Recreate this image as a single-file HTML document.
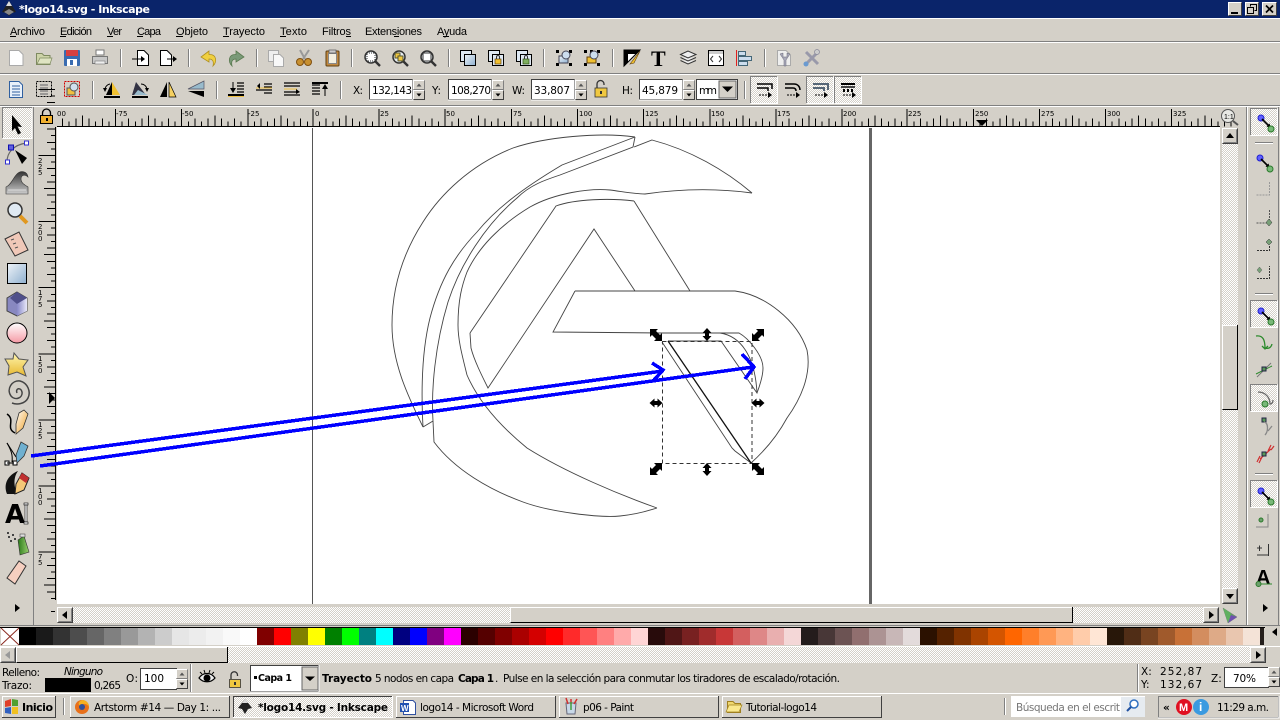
<!DOCTYPE html>
<html><head><meta charset="utf-8"><title>logo14.svg - Inkscape</title>
<style>
html,body{margin:0;padding:0;width:1280px;height:720px;overflow:hidden;background:#d4d0c8}
svg{position:absolute;left:0;top:0;display:block}
#pal{position:absolute;left:19px;top:628px;width:1245px;height:17px;display:flex;overflow:hidden}
#pal i{flex:0 0 17px;height:17px;display:block}
text{font-family:"Liberation Sans",sans-serif;font-size:11px;fill:#000}
.v{font-family:"DejaVu Sans",sans-serif;font-size:10.5px}
.b{font-family:"DejaVu Sans",sans-serif;font-size:10.5px;font-weight:bold}
.r{font-family:"DejaVu Sans",sans-serif;font-size:7px}
</style></head><body>
<svg width="1280" height="720" viewBox="0 0 1280 720" xmlns="http://www.w3.org/2000/svg">
<defs>
<pattern id="d" width="2" height="2" patternUnits="userSpaceOnUse"><rect width="2" height="2" fill="#d4d0c8"/><rect width="1" height="1" fill="#fff"/><rect x="1" y="1" width="1" height="1" fill="#fff"/></pattern>
<linearGradient id="gb" x1="0" y1="0" x2="1" y2="1"><stop offset="0" stop-color="#eef3f8"/><stop offset="1" stop-color="#8fb0cf"/></linearGradient>
<linearGradient id="gp" x1="0" y1="0" x2="0" y2="1"><stop offset="0" stop-color="#fff"/><stop offset="1" stop-color="#f59aa5"/></linearGradient>
<linearGradient id="gg" x1="0" y1="0" x2="0" y2="1"><stop offset="0" stop-color="#333"/><stop offset="1" stop-color="#ccc"/></linearGradient>
<linearGradient id="gy" x1="0" y1="0" x2="0" y2="1"><stop offset="0" stop-color="#fff6b0"/><stop offset="1" stop-color="#e8b830"/></linearGradient>
<linearGradient id="gs" x1="0" y1="0" x2="1" y2="0"><stop offset="0" stop-color="#8888c8"/><stop offset="1" stop-color="#e8e8f8"/></linearGradient>
<linearGradient id="ggr" x1="0" y1="0" x2="1" y2="0"><stop offset="0" stop-color="#2c7a1a"/><stop offset="1" stop-color="#9ad070"/></linearGradient>
<linearGradient id="go" x1="0" y1="0" x2="1" y2="1"><stop offset="0" stop-color="#fff"/><stop offset="1" stop-color="#f0a020"/></linearGradient>

<g id="b16"><rect width="16" height="16" fill="#d4d0c8"/><path d="M.5 15V.5H15" fill="none" stroke="#fff"/><path d="M.5 15.5H15.5V.5" fill="none" stroke="#404040"/><path d="M1.5 14.5H14.5V1.5" fill="none" stroke="#808080"/></g>
<g id="spin"><rect width="12" height="10" fill="#d4d0c8"/><rect y="10" width="12" height="10" fill="#d4d0c8"/><path d="M.5 9V.5H11" fill="none" stroke="#fff"/><path d="M.5 9.5H11.5V.5" fill="none" stroke="#808080"/><path d="M.5 19V10.5H11" fill="none" stroke="#fff"/><path d="M.5 19.5H11.5V10.5" fill="none" stroke="#404040"/><path d="M6 3.5 3.5 6.5H8.5Z" fill="#555"/><path d="M6 16.5 3.5 13.5H8.5Z" fill="#000"/></g>
<g id="snapn"><circle cx="3" cy="3" r="3" fill="#6060ff" stroke="#2020d0"/><path d="M4 4 11 11" stroke="#000" stroke-width="1.6"/><path d="M13 13 8.5 11.5 11.5 8.5Z" fill="#000"/><circle cx="13" cy="14" r="3" fill="#78b878" stroke="#2c7a2c"/></g>
<g id="tog"><rect width="28" height="28" fill="url(#d)"/><path d="M.5 27V.5H27" fill="none" stroke="#808080"/><path d="M.5 27.5H27.5V.5" fill="none" stroke="#fff"/></g>
<g id="tk"><path d="M0 .5V18" stroke="#000"/><path d="M6.61 13V18M19.84 13V18M33.07 13V18M46.3 13V18M59.53 13V18" stroke="#000"/><path d="M13.23 10V18M26.46 10V18M39.68 10V18M52.91 10V18" stroke="#000"/><path d="M33.07 7V18" stroke="#000"/></g>
<g id="tkv"><path d="M.5 0H17" stroke="#000"/><path d="M13 6.61H17M13 19.84H17M13 33.07H17M13 46.3H17M13 59.53H17" stroke="#000"/><path d="M9 13.23H17M9 26.46H17M9 39.68H17M9 52.91H17" stroke="#000"/><path d="M6 33.07H17" stroke="#000"/></g>
<g id="zoomic"><circle cx="7" cy="7" r="6" fill="#e8eef2" stroke="#333" stroke-width="1.5"/><path d="M11.5 11.5 16 16" stroke="#333" stroke-width="2.4"/></g>
<g id="ha"><path d="M0 5 5 .5V3H8V.5L13 5 8 9.5V7H5V9.5Z" fill="#000"/></g>
<g id="hv"><path d="M5 0 9.500 5H7V8H9.500L5 13 .5 8H3V5H.5Z" fill="#000"/></g>
<g id="hd1"><path d="M12 0V8L10 6 6 10 8 12H0V4L2 6 6 2 4 0Z" fill="#000"/></g>
<g id="hd2"><path d="M0 0H8L6 2 10 6 12 4V12H4L6 10 2 6 0 8Z" fill="#000"/></g>
</defs>

<rect width="1280" height="720" fill="#d4d0c8"/>

<!-- title bar -->
<rect width="1280" height="18" fill="#0a246a"/>
<path d="M9 1 16 12 12 13 9 16 6 13 2 12Z" fill="#222"/><path d="M9 1 12 6H6Z" fill="#ddd"/><path d="M4 12 9 9 14 12 9 15Z" fill="#888"/>
<text x="19" y="13" class="b" style="fill:#fff;font-size:11px" textLength="131" lengthAdjust="spacing">*logo14.svg - Inkscape</text>
<g transform="translate(1228,2)"><rect width="14" height="14" fill="#d4d0c8"/><path d="M.5 13V.5H13" fill="none" stroke="#fff"/><path d="M.5 13.500H13.500V.5" fill="none" stroke="#404040"/><rect x="3" y="10" width="7" height="2" fill="#000"/></g>
<g transform="translate(1245,2)"><rect width="14" height="14" fill="#d4d0c8"/><path d="M.5 13V.5H13" fill="none" stroke="#fff"/><path d="M.5 13.500H13.500V.5" fill="none" stroke="#404040"/><path d="M5.500 4.500V2.500H11.500V8.500H9.500M2.500 5.500H8.500V11.500H2.500Z" fill="none" stroke="#000"/><path d="M5 2.500H12M2 5.500H9" stroke="#000"/></g>
<g transform="translate(1262,2)"><rect width="15" height="14" fill="#d4d0c8"/><path d="M.5 13V.5H14" fill="none" stroke="#fff"/><path d="M.5 13.500H14.500V.5" fill="none" stroke="#404040"/><path d="M4 3.500 11 10.500M11 3.500 4 10.500" stroke="#000" stroke-width="1.7"/></g>

<rect y="18" width="1280" height="1" fill="#fff"/>
<rect y="41" width="1280" height="1" fill="#808080"/><rect y="42" width="1280" height="1" fill="#fff"/>
<rect y="73" width="1280" height="1" fill="#808080"/><rect y="74" width="1280" height="1" fill="#fff"/>
<rect y="105" width="1280" height="1" fill="#808080"/><rect y="106" width="1280" height="1" fill="#fff"/>

<!-- menu -->
<g>
<text x="10" y="35" textLength="35" lengthAdjust="spacing">Archivo</text><rect x="10" y="36" width="6" height="1" fill="#000"/>
<text x="60" y="35" textLength="32" lengthAdjust="spacing">Edición</text><rect x="60" y="36" width="6" height="1" fill="#000"/>
<text x="107" y="35" textLength="15" lengthAdjust="spacing">Ver</text><rect x="107" y="36" width="6" height="1" fill="#000"/>
<text x="137" y="35" textLength="24" lengthAdjust="spacing">Capa</text><rect x="137" y="36" width="6" height="1" fill="#000"/>
<text x="176" y="35" textLength="32" lengthAdjust="spacing">Objeto</text><rect x="176" y="36" width="7" height="1" fill="#000"/>
<text x="223" y="35" textLength="42" lengthAdjust="spacing">Trayecto</text><rect x="223" y="36" width="6" height="1" fill="#000"/>
<text x="280" y="35" textLength="27" lengthAdjust="spacing">Texto</text><rect x="280" y="36" width="6" height="1" fill="#000"/>
<text x="322" y="35" textLength="29" lengthAdjust="spacing">Filtros</text><rect x="346" y="36" width="5" height="1" fill="#000"/>
<text x="365" y="35" textLength="57" lengthAdjust="spacing">Extensiones</text><rect x="394" y="36" width="5" height="1" fill="#000"/>
<text x="437" y="35" textLength="30" lengthAdjust="spacing">Ayuda</text><rect x="443" y="36" width="6" height="1" fill="#000"/>
</g>

<!-- toolbar separators -->
<g fill="#808080">
<rect x="120" y="49" width="1" height="18"/><rect x="188" y="49" width="1" height="18"/><rect x="256" y="49" width="1" height="18"/><rect x="351" y="49" width="1" height="18"/><rect x="448" y="49" width="1" height="18"/><rect x="543" y="49" width="1" height="18"/><rect x="612" y="49" width="1" height="18"/><rect x="764" y="49" width="1" height="18"/>
<rect x="92" y="81" width="1" height="18"/><rect x="216" y="81" width="1" height="18"/><rect x="340" y="81" width="1" height="18"/><rect x="744" y="81" width="1" height="18"/>
</g>
<g fill="#fff">
<rect x="121" y="49" width="1" height="18"/><rect x="189" y="49" width="1" height="18"/><rect x="257" y="49" width="1" height="18"/><rect x="352" y="49" width="1" height="18"/><rect x="449" y="49" width="1" height="18"/><rect x="544" y="49" width="1" height="18"/><rect x="613" y="49" width="1" height="18"/><rect x="765" y="49" width="1" height="18"/>
<rect x="93" y="81" width="1" height="18"/><rect x="217" y="81" width="1" height="18"/><rect x="341" y="81" width="1" height="18"/><rect x="745" y="81" width="1" height="18"/>
</g>

<!-- toolbar 1 icons -->
<path d="M9.500 50.500H19L23 54.500V65.500H9.500Z" fill="#fff" stroke="#aaa"/>
<path d="M36.500 53.500H42L44 55.500H50V64.500H36.500Z" fill="#cdd3a8" stroke="#7e8a60"/><path d="M37 64 40 58H52L50 64Z" fill="#dfe4c2" stroke="#7e8a60" stroke-width=".7"/>
<rect x="64" y="50" width="16" height="16" rx="1" fill="#3a6cb0"/><rect x="66" y="50" width="12" height="6" fill="#d84040"/><rect x="67" y="59" width="10" height="7" fill="#fff"/><rect x="70" y="60" width="3" height="5" fill="#3a6cb0"/>
<rect x="96" y="50" width="8" height="5" fill="#fff" stroke="#777"/><path d="M92.500 56.500H107.500V63.500H92.500Z" fill="#c8c8c8" stroke="#777"/><rect x="95" y="61" width="10" height="3" fill="#eee" stroke="#777" stroke-width=".6"/>
<path d="M137.500 50.500H144L148.500 55V65.500H137.500Z" fill="#fff" stroke="#000"/><path d="M132 59H142" stroke="#000"/><path d="M145 59 141 56V62Z" fill="#000"/>
<path d="M160.500 50.500H167L171.500 55V65.500H160.500Z" fill="#fff" stroke="#000"/><path d="M167 59H174" stroke="#000"/><path d="M177 59 173 56V62Z" fill="#000"/>
<path d="M209 51 201 57 209 62V59C213 59 214 62 213 66 217 62 217 54 209 54.500Z" fill="#f0d040" stroke="#b09020" stroke-width=".8"/>
<path d="M236 51 244 57 236 62V59C232 59 231 62 232 66 228 62 228 54 236 54.500Z" fill="#7a9a78" stroke="#5a7a50" stroke-width=".8"/>
<rect x="268.500" y="50.500" width="10" height="11" fill="#eee" stroke="#aaa"/><path d="M273.500 54.500H280L283.500 58V66.500H273.500Z" fill="#f8f8f8" stroke="#aaa"/>
<path d="M300 50 305 59M309 50 303 59" stroke="#999" stroke-width="2"/><circle cx="300" cy="62" r="3.500" fill="#c89030" stroke="#805010"/><circle cx="308" cy="62" r="3.500" fill="#c89030" stroke="#805010"/>
<rect x="326" y="51" width="13" height="15" rx="1" fill="#c08840" stroke="#604010"/><rect x="328.500" y="53.500" width="8" height="10" fill="#f4f0e0" stroke="#888"/><rect x="329" y="50" width="7" height="3" fill="#ccc" stroke="#555" stroke-width=".7"/>
<use href="#zoomic" x="364" y="50"/><rect x="367" y="53" width="8" height="8" fill="#fff" stroke="#333" stroke-dasharray="1 1"/>
<use href="#zoomic" x="392" y="50"/><rect x="395" y="53" width="5" height="5" fill="#f0c840" stroke="#553"/><rect x="398" y="56" width="5" height="5" fill="#f0c840" stroke="#553"/>
<use href="#zoomic" x="420" y="50"/><rect x="423" y="53" width="8" height="8" fill="#fff" stroke="#333"/>
<rect x="460.500" y="50.500" width="11" height="11" fill="#dfe9f3" stroke="#000"/><rect x="464.500" y="54.500" width="11" height="11" fill="url(#gb)" stroke="#000"/>
<rect x="488.500" y="50.500" width="11" height="11" fill="#dfe9f3" stroke="#000"/><rect x="492.500" y="54.500" width="11" height="11" fill="#dfe9f3" stroke="#000"/><rect x="495" y="59" width="6" height="5" fill="#f0c030" stroke="#604010" stroke-width=".7"/><path d="M496.500 59V57A1.500 1.500 0 0 1 499.500 57V59" fill="none" stroke="#333"/>
<rect x="516.500" y="50.500" width="11" height="11" fill="#dfe9f3" stroke="#000"/><rect x="520.500" y="54.500" width="11" height="11" fill="#dfe9f3" stroke="#000"/><rect x="523" y="59" width="6" height="5" fill="#80b060" stroke="#305010" stroke-width=".7"/><path d="M524.500 59V57A1.500 1.500 0 0 1 527.500 57V59" fill="none" stroke="#333"/>
<g fill="#000"><rect x="556" y="50" width="3" height="3"/><rect x="569" y="50" width="3" height="3"/><rect x="556" y="63" width="3" height="3"/><rect x="569" y="63" width="3" height="3"/></g><rect x="559" y="56" width="9" height="7" fill="url(#gb)" stroke="#445"/><circle cx="566" cy="55" r="4" fill="#cde" stroke="#445"/>
<g fill="#000"><rect x="584" y="50" width="3" height="3"/><rect x="597" y="50" width="3" height="3"/><rect x="584" y="63" width="3" height="3"/><rect x="597" y="63" width="3" height="3"/><rect x="590" y="50" width="3" height="3"/></g><rect x="587" y="57" width="9" height="6" fill="#f0c030" stroke="#604010"/><circle cx="594" cy="55" r="4" fill="#cde" stroke="#445"/>
<path d="M624 50H640L624 66Z" fill="#fff" stroke="#000"/><path d="M624 66V50H640L636 54H628V62Z" fill="#000"/><path d="M630 64 640 51 634 63Z" fill="#f0c030" stroke="#604010" stroke-width=".6"/>
<text x="651" y="66" style="font-family:'Liberation Serif',serif;font-weight:bold;font-size:22px">T</text>
<path d="M680.500 54.500 688 51 696 54.500 688 58Z M680.500 57.500 688 61 696 57.500M680.500 60.500 688 64 696 60.500" fill="#eee" stroke="#333"/>
<rect x="708.500" y="50.500" width="15" height="15" fill="#fff" stroke="#000"/><rect x="709" y="51" width="14" height="3" fill="#ccc"/><path d="M713 56 710.500 59 713 62M719 56 721.500 59 719 62" fill="none" stroke="#333"/>
<rect x="736" y="50" width="1" height="16" fill="#e02020"/><rect x="738.500" y="51.500" width="7" height="4" fill="#cde" stroke="#467"/><rect x="738.500" y="56.500" width="13" height="4" fill="#cde" stroke="#467"/><rect x="738.500" y="61.500" width="9" height="4" fill="#cde" stroke="#467"/>
<path d="M777.500 50.500H786L790.500 55V65.500H777.500Z" fill="#eee" stroke="#aaa"/><path d="M780 54 784 60V66H786V60L790 54 787 53V57H783V53Z" fill="#aab" stroke="#667" stroke-width=".5"/>
<path d="M806 52 818 64M818 52 806 64" stroke="#99a" stroke-width="3"/><circle cx="806" cy="64" r="2.500" fill="#6a9ad0"/><circle cx="817" cy="52" r="2.500" fill="#ccc" stroke="#889" stroke-width=".7"/>

<!-- toolbar 2 icons -->
<path d="M9.500 81.500H19L22.500 85V97.500H9.500Z" fill="#e8f0fa" stroke="#3060a0"/><path d="M12 86H20M12 89H20M12 92H20M12 95H20" stroke="#3060a0"/>
<rect x="36.500" y="81.500" width="15" height="15" fill="none" stroke="#000" stroke-dasharray="2 1"/><path d="M40 85H48M40 88H48M40 91H48M40 94H48" stroke="#777" stroke-width="1.300"/>
<rect x="64.500" y="81.500" width="15" height="15" fill="none" stroke="#d00000" stroke-dasharray="2 1"/><rect x="67" y="88" width="8" height="7" fill="#f0c040" stroke="#555"/><circle cx="74" cy="87" r="4" fill="#d0e0f0" stroke="#555"/>
<path d="M104 96H120V98H104Z" fill="#000"/><path d="M112 82 120 95H108Z" fill="#f0c030"/><path d="M112 82 106 95H112Z" fill="#000"/><path d="M105 89A6 6 0 0 1 110 84" fill="none" stroke="#000"/><path d="M103 88 107 88 105 92Z" fill="#000"/>
<path d="M132 96H148V98H132Z" fill="#000"/><path d="M136 82 132 95H146Z" fill="#334"/><path d="M138 90 148 95H134Z" fill="#9bc"/><path d="M147 89A6 6 0 0 0 141 84" fill="none" stroke="#000"/><path d="M149 88 145 88 147 92Z" fill="#000"/>
<path d="M167 82V97H160Z" fill="#000"/><path d="M169 82V97H176Z" fill="#f5d060" stroke="#000" stroke-width=".7"/>
<path d="M204 81V89H188Z" fill="#9bc" stroke="#556" stroke-width=".7"/><path d="M204 97V91H188Z" fill="#000"/>
<rect x="228" y="94" width="16" height="2" fill="#000"/><rect x="228" y="96" width="16" height="1" fill="#f0c040"/><path d="M233 82V91" stroke="#000"/><path d="M233 93 230 88H236Z" fill="#000"/><path d="M237 83H244M237 86H244M237 89H244M237 92H244" stroke="#000" stroke-width="1.300"/>
<path d="M264 84H272M264 87H272M256 90H272M264 93H272" stroke="#000" stroke-width="1.300"/><path d="M256 88H272" stroke="#f0c040"/><path d="M257 86 260 83V89Z" fill="#000"/>
<path d="M284 83H300M284 86H300M284 92H296M284 95H300" stroke="#000" stroke-width="1.300"/><path d="M284 89H297" stroke="#f0c040"/><path d="M300 92 296 89V94Z" fill="#000"/>
<rect x="312" y="82" width="16" height="2" fill="#000"/><path d="M312 85H320M312 88H320M312 91H320M312 94H320" stroke="#000" stroke-width="1.300"/><path d="M325 96V87" stroke="#000"/><path d="M325 84 322 89H328Z" fill="#000"/>

<!-- toolbar 2 fields -->
<g><text x="353" y="94" class="v" textLength="10">X:</text><text x="432" y="94" class="v" textLength="9">Y:</text><text x="512" y="94" class="v" textLength="13">W:</text><text x="622" y="94" class="v" textLength="11">H:</text></g>
<g fill="#fff" stroke="#404040"><rect x="369.500" y="79.500" width="43" height="20"/><rect x="448.500" y="79.500" width="43" height="20"/><rect x="531.500" y="79.500" width="43" height="20"/><rect x="639.500" y="79.500" width="43" height="20"/></g>
<g stroke="#fff" fill="none"><path d="M413 79.500V100H369"/><path d="M492 79.500V100H448"/><path d="M575 79.500V100H531"/><path d="M683 79.500V100H639"/></g>
<text x="372" y="94" class="v" textLength="40" lengthAdjust="spacing">132,143</text>
<text x="451" y="94" class="v" textLength="40" lengthAdjust="spacing">108,270</text>
<text x="534" y="94" class="v" textLength="36" lengthAdjust="spacing">33,807</text>
<text x="642" y="94" class="v" textLength="36" lengthAdjust="spacing">45,879</text>
<use href="#spin" x="413" y="80"/><use href="#spin" x="492" y="80"/><use href="#spin" x="575" y="80"/><use href="#spin" x="683" y="80"/>
<rect x="595" y="88" width="12" height="9" fill="#f0c840" stroke="#333" stroke-width=".8"/><path d="M597 88V84A3.500 3.500 0 0 1 604 84V85" fill="none" stroke="#333" stroke-width="1.300"/><rect x="600" y="91" width="2" height="3" fill="#333"/>
<rect x="696.500" y="79.500" width="41" height="20" fill="#fff" stroke="#404040"/><text x="699" y="94" class="v" textLength="18">mm</text><rect x="719" y="81" width="17" height="17" fill="#d4d0c8" stroke="#666"/><path d="M722 86.500H733L727.500 92Z" fill="#000"/>
<use href="#tog" x="750" y="76"/><use href="#tog" x="806" y="76"/><use href="#tog" x="834" y="76"/>
<g fill="none" stroke="#000" stroke-width="1.500"><path d="M757 84H772V89M757 88H768V91"/><path d="M785 84H794C798 84 800 87 800 90M785 88H793C795 88 796 89 796 91"/></g>
<path d="M813 84H828V90M813 88H824V91" fill="none" stroke="#567" stroke-width="2"/>
<g fill="#000"><rect x="841" y="83" width="14" height="2"/><rect x="841" y="86" width="14" height="2" fill="#444"/><path d="M843 89h2v3h-2zM847 89h2v3h-2zM851 89h2v3h-2z"/></g>
<g stroke="#000" stroke-dasharray="2 1"><path d="M759 95H768M787 95H796M815 95H824M843 95H852"/></g>
<g fill="#000"><path d="M772 95 768 92V98Z"/><path d="M800 95 796 92V98Z"/><path d="M828 95 824 92V98Z"/><path d="M856 95 852 92V98Z"/></g>

<!-- canvas -->
<rect x="57" y="127" width="1163" height="477" fill="#fff"/>

<!-- rulers -->
<g shape-rendering="crispEdges">
<rect x="57" y="126" width="1163" height="1" fill="#000"/>
<g transform="translate(0,108.500)">
<use href="#tk" x="49.400"/><use href="#tk" x="115.500"/><use href="#tk" x="181.700"/><use href="#tk" x="247.800"/><use href="#tk" x="313"/><use href="#tk" x="379.100"/><use href="#tk" x="445.200"/><use href="#tk" x="511.400"/><use href="#tk" x="577.500"/><use href="#tk" x="643.600"/><use href="#tk" x="709.800"/><use href="#tk" x="775.900"/><use href="#tk" x="842"/><use href="#tk" x="907.200"/><use href="#tk" x="973.300"/><use href="#tk" x="1039.500"/><use href="#tk" x="1105.600"/><use href="#tk" x="1171.700"/>
</g>
<rect x="55" y="127" width="1" height="477" fill="#000"/>
<g transform="translate(38,0)">
<use href="#tkv" y="89.400"/><use href="#tkv" y="155.500"/><use href="#tkv" y="221.600"/><use href="#tkv" y="287.700"/><use href="#tkv" y="353.800"/><use href="#tkv" y="419.900"/><use href="#tkv" y="486"/><use href="#tkv" y="552.100"/>
</g>
<rect x="34" y="107" width="23" height="20" fill="#d4d0c8"/>
<rect x="1220" y="107" width="3" height="20" fill="#d4d0c8"/>
<rect x="34" y="600" width="23" height="7" fill="#d4d0c8"/>
</g>
<g>
<text class="r" x="57" y="116">00</text><text class="r" x="116" y="116">-75</text><text class="r" x="182" y="116">-50</text><text class="r" x="248" y="116">-25</text><text class="r" x="315" y="116">0</text><text class="r" x="380" y="116">25</text><text class="r" x="446" y="116">50</text><text class="r" x="513" y="116">75</text><text class="r" x="579" y="116">100</text><text class="r" x="645" y="116">125</text><text class="r" x="711" y="116">150</text><text class="r" x="777" y="116">175</text><text class="r" x="843" y="116">200</text><text class="r" x="908" y="116">225</text><text class="r" x="975" y="116">250</text><text class="r" x="1041" y="116">275</text><text class="r" x="1107" y="116">300</text><text class="r" x="1173" y="116">325</text>
</g>
<g>
<text class="r" x="38" y="163">2</text><text class="r" x="38" y="169">2</text><text class="r" x="38" y="175">5</text>
<text class="r" x="38" y="229">2</text><text class="r" x="38" y="235">0</text><text class="r" x="38" y="241">0</text>
<text class="r" x="38" y="295">1</text><text class="r" x="38" y="301">7</text><text class="r" x="38" y="307">5</text>
<text class="r" x="38" y="361">1</text><text class="r" x="38" y="367">5</text><text class="r" x="38" y="373">0</text>
<text class="r" x="38" y="427">1</text><text class="r" x="38" y="433">2</text><text class="r" x="38" y="439">5</text>
<text class="r" x="38" y="493">1</text><text class="r" x="38" y="499">0</text><text class="r" x="38" y="505">0</text>
<text class="r" x="38" y="559">7</text><text class="r" x="38" y="565">5</text>
</g>
<path d="M976 120H988L982 126Z" fill="#000"/><path d="M49 392V404L55 398Z" fill="#000"/>
<!-- ruler lock -->
<rect x="40.500" y="115.500" width="12" height="8" fill="#f0b030" stroke="#000"/><path d="M42.500 115V113A4 4 0 0 1 50.500 113V115" fill="none" stroke="#000" stroke-width="1.300"/><rect x="46" y="118" width="2" height="3" fill="#000"/>
<!-- 1:1 -->
<circle cx="1228" cy="116" r="6.500" fill="#e8e8e4" stroke="#555"/><path d="M1233 121 1238 125" stroke="#555" stroke-width="2"/><text x="1224" y="119" style="font-size:7px">1:1</text>

<!-- page -->
<rect x="312" y="128" width="1" height="476" fill="#555"/>
<rect x="869" y="128" width="3" height="476" fill="#666"/>

<!-- drawing -->
<g fill="none" stroke="#444" stroke-width=".9">
<path d="M635 137C600 132 545 137 513 148C470 165 440 195 423 222C405 250 392 285 392 325C392 365 410 400 423 427"/>
<path d="M423 427C421 390 422 350 430 318C440 280 455 255 477 232C495 210 520 190 562 165L635 137"/>
<path d="M423 427 433 421C431 390 435 345 448 302C460 265 485 225 517 198C530 185 545 180 560 175L633 147 635 137"/>
<path d="M433 421 434 442C455 470 490 490 523 502C550 512 600 518 620 516S650 510 657 508"/>
<path d="M657 508C620 495 565 472 527 448C505 430 480 405 467 375C462 355 458 340 458 325C458 300 462 285 467 272C478 248 500 225 530 207C555 193 590 188 610 190C625 192 635 194 645 194Q700 186 752 193"/>
<path d="M752 193C725 170 690 150 652 140L634 147"/>
<path d="M634 201 690 291"/>
<path d="M470 333 556 206C575 199 610 198 634 201"/>
<path d="M470 333 471 348C474 360 482 376 488 388L594 229 635 291"/>
<path d="M575 291 553 332 662 333 739 333C748 338 763 355 763 368C763 375 760 385 757 393L721 341 668 341"/>
<path d="M575 291 735 291C765 295 797 320 807 350C812 375 800 400 787 418C775 440 760 455 751 463L735 451 732 448 662 342"/>
<path d="M720 333C740 336 755 355 757 393"/>
<path d="M668 341 751 463" stroke="#111" stroke-width="1.300"/>
</g>
<rect x="662.500" y="341.500" width="89.500" height="122" fill="none" stroke="#333" stroke-dasharray="4 3"/>
<use href="#hd2" x="650" y="329"/><use href="#hd1" x="752" y="329"/><use href="#hd1" x="650" y="463"/><use href="#hd2" x="752" y="463"/>
<use href="#hv" x="702" y="328"/><use href="#hv" x="702" y="463"/><use href="#ha" x="649.500" y="398"/><use href="#ha" x="751.500" y="398"/>

<!-- left toolbar -->
<rect x="33" y="107" width="1" height="518" fill="#808080"/>
<rect x="2" y="107" width="30" height="31" fill="url(#d)"/><path d="M2.500 138V107.500H32" fill="none" stroke="#808080"/><path d="M2.500 138.500H32V108" fill="none" stroke="#fff"/>
<path d="M12 115 22 127 17.500 126.500 21 133 18 134.500 15 128 12 131Z" fill="#000"/>
<path d="M7 162C7 152 14 145 26 143" fill="none" stroke="#666" stroke-width="1.200"/><rect x="8.500" y="145" width="5" height="5" fill="#6060e0" stroke="#1010b0"/><rect x="24.500" y="141" width="4" height="4" fill="#fff" stroke="#3030d0"/><rect x="5.500" y="160" width="4" height="4" fill="#fff" stroke="#3030d0"/><path d="M15 150 27 158 22 164Z" fill="#000"/>
<path d="M6 194V187C11 185 13 178 17 174 21 170 27 171 28 177 25 174 21 175 21 179 21 183 25 185 28 187V194Z" fill="url(#gg)" stroke="#333" stroke-width=".6"/><path d="M8 190H26" stroke="#eee" stroke-width=".8"/>
<circle cx="15" cy="210" r="7" fill="#dfe9f2" stroke="#333" stroke-width="1.500"/><path d="M20 216 27 223" stroke="#e09820" stroke-width="4"/>
<path d="M5 239 19 232 28 250 15 256Z" fill="#f0c8b8" stroke="#333"/><path d="M11 240 14 239M13 244 16 243M15 248 18 247" stroke="#555"/>
<rect x="7.500" y="263.500" width="19" height="20" fill="url(#gb)" stroke="#000"/>
<path d="M17 292 27 298V311L17 316 7 311V298Z" fill="#8888c0" stroke="#444"/><path d="M17 292 27 298 17 304 10 298Z" fill="#50508a"/><path d="M17 304 27 298V311L17 316Z" fill="url(#gs)"/>
<circle cx="17" cy="333" r="10" fill="url(#gp)" stroke="#000"/>
<path d="M14 353 19 359 28 360 23 367 26 376 17 372 8 375 9 366 5 359 13 359Z" fill="url(#gy)" stroke="#555"/>
<path d="M17 393C15 388 21 387 22 392 23 398 15 401 11 396 6 389 12 380 20 381 28 383 31 392 28 398 25 404 17 405 12 403" fill="none" stroke="#444" stroke-width="1.500"/>
<path d="M15 433C5 428 16 420 7 414" fill="none" stroke="#000" stroke-width="1.500"/><path d="M19 413 24 410 28 414 23 428 16 434 16 424Z" fill="url(#go)" stroke="#333" stroke-width=".8"/>
<path d="M7 443C11 450 13 455 12 462" fill="none" stroke="#000"/><path d="M7 443 16 457" stroke="#000"/><rect x="5" y="461" width="4" height="4" fill="#fff" stroke="#000"/><rect x="13" y="461" width="4" height="4" fill="#fff" stroke="#000"/><path d="M7 463H14" stroke="#000"/><path d="M21 442 28 446 24 456 17 463 16 455Z" fill="#6fb0d0" stroke="#333" stroke-width=".8"/>
<path d="M7 494C3 484 8 475 18 471 13 478 14 486 17 494Z" fill="#111"/><path d="M22 473 29 478 24 490 15 494 16 484Z" fill="#f4c878" stroke="#222"/><path d="M22 473 29 478 26 483 19 478Z" fill="#c03030"/>
<text x="5" y="523" style="font-family:'DejaVu Sans',sans-serif;font-weight:bold;font-size:26px">A</text><rect x="24" y="503" width="4" height="2" fill="#fff" stroke="#000" stroke-width=".6"/><rect x="25" y="505" width="2" height="17" fill="#fff" stroke="#000" stroke-width=".6"/><rect x="24" y="522" width="4" height="2" fill="#fff" stroke="#000" stroke-width=".6"/>
<path d="M18 540 24 536 29 552 20 555Z" fill="url(#ggr)" stroke="#333" stroke-width=".6"/><rect x="20" y="534" width="5" height="3" fill="#ddd" stroke="#333" stroke-width=".5"/><g fill="#444"><rect x="8" y="536" width="2" height="2"/><rect x="12" y="534" width="2" height="2"/><rect x="10" y="540" width="2" height="2"/><rect x="14" y="538" width="2" height="2"/><rect x="7" y="532" width="2" height="2"/></g>
<path d="M7 578 19 561 26 566 15 584Z" fill="#f6cfc0" stroke="#333"/>
<path d="M15 604V612L20 608Z" fill="#000"/>

<!-- scrollbars -->
<rect x="1222" y="128" width="16" height="476" fill="url(#d)"/>
<use href="#b16" x="1222" y="128"/><path d="M1230 133 1226 138H1234Z" fill="#000"/>
<use href="#b16" x="1222" y="588"/><path d="M1230 599 1226 594H1234Z" fill="#000"/>
<rect x="1222" y="325" width="16" height="84" fill="#d4d0c8"/><path d="M1222.500 409V325.500H1238" fill="none" stroke="#fff"/><path d="M1222.500 409.500H1237.500V325" fill="none" stroke="#000"/>
<rect x="57" y="607" width="1162" height="16" fill="url(#d)"/>
<use href="#b16" x="57" y="607"/><path d="M62 615 67 611V619Z" fill="#000"/>
<use href="#b16" x="1203" y="607"/><path d="M1214 615 1209 611V619Z" fill="#000"/>
<rect x="510" y="607" width="563" height="16" fill="#d4d0c8"/><path d="M510.500 623V607.500H1073" fill="none" stroke="#fff"/><path d="M510.500 622.500H1072.500V607" fill="none" stroke="#000"/>
<path d="M1223 608 1237 617 1228 623Z" fill="#60a060" stroke="#777" stroke-width=".5"/><path d="M1223 608 1228 623 1231 613Z" fill="#60b060"/><path d="M1228 623 1237 617 1231 615Z" fill="#7050b0"/>

<!-- right toolbar -->
<rect x="1246" y="107" width="1" height="518" fill="#808080"/><rect x="1247" y="107" width="1" height="518" fill="#fff"/><rect x="1278" y="107" width="1" height="518" fill="#808080"/>
<use href="#tog" x="1250" y="108"/><use href="#snapn" x="1258" y="115"/>
<rect x="1255" y="142" width="18" height="1" fill="#808080"/><rect x="1255" y="143" width="18" height="1" fill="#fff"/>
<use href="#snapn" x="1257" y="155"/>
<path d="M1256.500 195H1269.500V182" fill="none" stroke="#999" stroke-dasharray="2 1"/>
<path d="M1256.500 223H1269.500V210" fill="none" stroke="#555" stroke-dasharray="2 1"/><path d="M1269 219 1272 222.500 1269 226 1266 222.500Z" fill="#78a078" stroke="#333" stroke-width=".5"/>
<path d="M1257 250.500H1269.500V245" fill="none" stroke="#333" stroke-dasharray="2 1"/><path d="M1269 239 1272 242 1269 245 1266 242Z" fill="#78a078" stroke="#333" stroke-width=".5"/>
<path d="M1257 278.500H1269.500V266" fill="none" stroke="#333" stroke-dasharray="2 1"/><path d="M1259.500 267 1262 270 1259.500 273 1257 270Z" fill="#78a078" stroke="#666" stroke-width=".5"/>
<rect x="1255" y="293" width="18" height="1" fill="#808080"/><rect x="1255" y="294" width="18" height="1" fill="#fff"/>
<use href="#tog" x="1250" y="300"/><use href="#snapn" x="1258" y="308"/>
<path d="M1256 336C1263 335 1265 340 1265 348 1268 349 1271 348 1272 344M1262 346 1265 349 1268 346" fill="none" stroke="#2c8a2c" stroke-width="1.300"/>
<path d="M1257 377 1271 363" stroke="#777"/><path d="M1256 374 1272 366" stroke="#2c8a2c"/><rect x="1262" y="367" width="4" height="4" fill="#589858" stroke="#224"/>
<use href="#tog" x="1250" y="384"/><path d="M1258 392C1266 392 1270 398 1270 404 1272 404 1273 402 1273 400" fill="none" stroke="#666" stroke-width="1.300"/><circle cx="1265" cy="404" r="3" fill="#78b878" stroke="#2c7a2c"/>
<rect x="1262" y="418" width="4" height="4" fill="#589858" stroke="#224"/><path d="M1264 422C1269 423 1268 432 1265 435M1268 431 1272 426" fill="none" stroke="#888" stroke-width="1.300"/>
<path d="M1257 462 1260 456M1259 463 1262 457M1271 450 1274 446M1268 451 1271 445M1260 459 1271 449" stroke="#d03030" stroke-width="1.200"/><rect x="1262" y="452" width="4" height="4" fill="#589858" stroke="#224"/>
<rect x="1255" y="473" width="18" height="1" fill="#808080"/><rect x="1255" y="474" width="18" height="1" fill="#fff"/>
<use href="#tog" x="1250" y="480"/><use href="#snapn" x="1258" y="488"/>
<path d="M1256 527H1268V514" fill="none" stroke="#888"/><circle cx="1261" cy="520" r="2" fill="#6ca06c" stroke="#2c7a2c"/>
<path d="M1257 548H1262M1259.500 545.500V551M1257 555H1268M1268.500 544V556" fill="none" stroke="#333"/>
<text x="1256" y="584" style="font-weight:bold;font-size:20px">A</text><path d="M1257 584H1272" stroke="#2c8a2c"/><circle cx="1258.500" cy="584" r="2.500" fill="#6ca06c" stroke="#2c7a2c"/>
<path d="M1263 604V612L1268 608Z" fill="#000"/>

<!-- palette frame -->
<rect x="0" y="625" width="1280" height="1" fill="#808080"/>
<rect x="0" y="627" width="1265" height="1" fill="#000"/>
<rect x="1" y="628" width="18" height="17" fill="#fff"/><path d="M1 628 19 645M19 628 1 645" stroke="#8b2a20"/>
<path d="M1277 628V636L1272 632Z" fill="#000"/>
<rect y="646" width="1280" height="1" fill="#fff"/>
<rect x="0" y="647" width="1266" height="16" fill="url(#d)"/>
<use href="#b16" x="0" y="647"/><path d="M5 655 10 651V659Z" fill="#999"/>
<rect x="16" y="647" width="212" height="16" fill="#d4d0c8"/><path d="M16.500 663V647.500H228" fill="none" stroke="#fff"/><path d="M16.500 662.500H227.500V647" fill="none" stroke="#000"/>
<use href="#b16" x="1250" y="647"/><path d="M1261 655 1256 651V659Z" fill="#000"/>

<!-- status bar -->
<text x="2" y="676" class="v" textLength="38" lengthAdjust="spacing">Relleno:</text>
<text x="64" y="675" class="v" style="font-style:italic" textLength="39" lengthAdjust="spacing">Ninguno</text>
<text x="2" y="689" class="v" textLength="30" lengthAdjust="spacing">Trazo:</text>
<rect x="45" y="678" width="46" height="14" fill="#000"/>
<text x="94" y="689" class="v" textLength="27" lengthAdjust="spacing">0,265</text>
<text x="126" y="682" class="v" textLength="12">O:</text>
<rect x="140.500" y="668.500" width="36" height="21" fill="#fff" stroke="#404040"/>
<text x="144" y="682" class="v" textLength="20">100</text>
<use href="#spin" x="176" y="669"/>
<rect x="190" y="664" width="1" height="28" fill="#808080"/><rect x="191" y="664" width="1" height="28" fill="#fff"/>
<path d="M199 678C203 672 211 672 215 678 211 683 203 683 199 678Z" fill="#eee" stroke="#000" stroke-width="1.200"/><circle cx="207" cy="678" r="3.500" fill="#000"/><path d="M200 672 202 674M204 670 205 673M210 670 209 673M214 672 212 674" stroke="#000"/>
<rect x="229.500" y="679.500" width="11" height="8" fill="#f0c840" stroke="#333" stroke-width=".8"/><path d="M231 679V675A3 3 0 0 1 237.500 675V676" fill="none" stroke="#333" stroke-width="1.300"/><rect x="234" y="682" width="2" height="3" fill="#333"/>
<rect x="250.500" y="665.500" width="68" height="26" fill="#fff" stroke="#404040"/><path d="M319 665V692H250" fill="none" stroke="#fff"/>
<rect x="254" y="676" width="3" height="3" fill="#000"/>
<text x="258" y="681" class="b" style="font-size:9.500px" textLength="34" lengthAdjust="spacing">Capa 1</text>
<rect x="302" y="667" width="16" height="23" fill="#d4d0c8" stroke="#666"/><path d="M305 676.500H315L310 681Z" fill="#000"/>
<text x="322" y="682" class="b" textLength="50" lengthAdjust="spacing">Trayecto</text>
<text x="375" y="682" class="v" textLength="79" lengthAdjust="spacing">5 nodos en capa</text>
<text x="458" y="682" class="b" textLength="36" lengthAdjust="spacing">Capa 1</text>
<text x="495" y="682" class="v">.</text>
<text x="503" y="682" class="v" textLength="337" lengthAdjust="spacing">Pulse en la selección para conmutar los tiradores de escalado/rotación.</text>
<rect x="1137" y="664" width="1" height="28" fill="#808080"/><rect x="1138" y="664" width="1" height="28" fill="#fff"/>
<text x="1141" y="675" class="v">X:</text><text x="1141" y="688" class="v">Y:</text>
<text x="1160" y="675" class="v" textLength="42" lengthAdjust="spacing">252,87</text>
<text x="1160" y="688" class="v" textLength="42" lengthAdjust="spacing">132,67</text>
<text x="1211" y="682" class="v">Z:</text>
<rect x="1224.500" y="667.500" width="44" height="20" fill="#fff" stroke="#404040"/><text x="1233" y="682" class="v" textLength="23" lengthAdjust="spacing">70%</text>
<use href="#spin" x="1268" y="667"/>

<!-- taskbar -->
<rect y="693" width="1280" height="1" fill="#fff"/>
<g>
<rect x="2.500" y="696.500" width="53" height="21" fill="#d4d0c8" stroke="#fff"/><path d="M55.500 696V717.500H2" fill="none" stroke="#404040"/>
<path d="M5 701 11 699V706L5 707Z" fill="#e0402a"/><path d="M12 699 18 700V706L12 706Z" fill="#50a030"/><path d="M5 708 11 707V714L5 713Z" fill="#3060c0"/><path d="M12 707 18 707V714L12 714Z" fill="#f0c020"/>
<text x="22" y="711" class="b" style="font-size:11px" textLength="31" lengthAdjust="spacing">Inicio</text>
<rect x="63" y="698" width="1" height="17" fill="#808080"/><rect x="64" y="698" width="1" height="17" fill="#fff"/>

<rect x="70.500" y="696.500" width="159" height="21" fill="#d4d0c8" stroke="#fff"/><path d="M229.500 696V717.500H70" fill="none" stroke="#404040"/>
<circle cx="82" cy="707" r="7" fill="#e8701a"/><path d="M82 700A7 7 0 0 1 89 707C87 703 83 703 80 706 78 704 78 702 82 700Z" fill="#f5b020"/><circle cx="82" cy="707" r="3" fill="#30509a"/>
<text x="94" y="711" class="v" textLength="127" lengthAdjust="spacing">Artstorm #14 — Day 1: ...</text>

<rect x="233.500" y="696.500" width="159" height="21" fill="url(#d)" stroke="#404040"/><path d="M392.500 696V717.500H233" fill="none" stroke="#fff"/>
<path d="M245 699 252 708 248 709 245 714 242 709 238 708Z" fill="#222"/><path d="M245 699 248 703H242Z" fill="#ddd"/>
<text x="258" y="711" class="b" textLength="130" lengthAdjust="spacing">*logo14.svg - Inkscape</text>

<rect x="396.500" y="696.500" width="159" height="21" fill="#d4d0c8" stroke="#fff"/><path d="M555.500 696V717.500H396" fill="none" stroke="#404040"/>
<path d="M403.500 700.500H413L415.500 703V714.500H403.500Z" fill="#fff" stroke="#3050a0"/><rect x="400" y="703" width="9" height="9" fill="#2050b0"/><text x="401" y="711" style="fill:#fff;font-size:8px;font-weight:bold">W</text>
<text x="420" y="711" class="v" textLength="114" lengthAdjust="spacing">logo14 - Microsoft Word</text>

<rect x="559.500" y="696.500" width="159" height="21" fill="#d4d0c8" stroke="#fff"/><path d="M718.500 696V717.500H559" fill="none" stroke="#404040"/>
<path d="M566 703H576L575 714H567Z" fill="#c8d8e8" stroke="#667"/><path d="M568 704 566 698M571 704V699M574 704 577 699" stroke="#d03030" stroke-width="1.500"/><path d="M571 710V702" stroke="#40a040" stroke-width="1.500"/>
<text x="583" y="711" class="v" textLength="51" lengthAdjust="spacing">p06 - Paint</text>

<rect x="722.500" y="696.500" width="159" height="21" fill="#d4d0c8" stroke="#fff"/><path d="M881.500 696V717.500H722" fill="none" stroke="#404040"/>
<path d="M727.500 701.500H733L735 703.500H740.500V712.500H727.500Z" fill="#f0d870" stroke="#a08020"/><path d="M726 712 729 705H742L739 712Z" fill="#fbe98e" stroke="#a08020" stroke-width=".7"/>
<text x="746" y="711" class="v" textLength="71" lengthAdjust="spacing">Tutorial-logo14</text>
</g>
<rect x="1004" y="698" width="1" height="17" fill="#808080"/><rect x="1005" y="698" width="1" height="17" fill="#fff"/>
<rect x="1011" y="696" width="134" height="21" fill="#fff"/>
<text x="1016" y="711" class="v" style="fill:#777" textLength="104" lengthAdjust="spacing">Búsqueda en el escrit</text>
<rect x="1121" y="697" width="24" height="20" fill="#e6ebf0"/>
<circle cx="1134" cy="704" r="4" fill="#fff" stroke="#3070c0" stroke-width="1.500"/><path d="M1131 707 1127 711" stroke="#2050a0" stroke-width="2"/>
<rect x="1158.500" y="696.500" width="120" height="21" fill="#d4d0c8" stroke="#808080"/><path d="M1279 696V718H1158" fill="none" stroke="#fff"/>
<text x="1163" y="711" class="b">«</text>
<circle cx="1184" cy="707" r="8" fill="#e01020"/><text x="1179" y="711" style="fill:#fff;font-weight:bold;font-size:11px">M</text>
<circle cx="1201" cy="707" r="8" fill="#3a9ae0"/><text x="1199" y="711" style="fill:#fff;font-weight:bold;font-size:12px">i</text>
<text x="1217" y="711" class="v" textLength="52" lengthAdjust="spacing">11:29 a.m.</text>

<!-- blue arrows on top -->
<g fill="none" stroke="#0000ff" stroke-width="3.500" shape-rendering="crispEdges">
<path d="M31 456 663 371"/>
<path d="M40 466 753 367"/>
<path d="M652 363 663 370 654 380"/>
<path d="M742 354 754 367 745 379"/>
</g>
</svg>
<div id="pal"><i style="background:#000000"></i><i style="background:#1a1a1a"></i><i style="background:#333333"></i><i style="background:#4d4d4d"></i><i style="background:#666666"></i><i style="background:#808080"></i><i style="background:#999999"></i><i style="background:#b3b3b3"></i><i style="background:#cccccc"></i><i style="background:#e6e6e6"></i><i style="background:#ececec"></i><i style="background:#f2f2f2"></i><i style="background:#f9f9f9"></i><i style="background:#ffffff"></i><i style="background:#800000"></i><i style="background:#ff0000"></i><i style="background:#808000"></i><i style="background:#ffff00"></i><i style="background:#008000"></i><i style="background:#00ff00"></i><i style="background:#008080"></i><i style="background:#00ffff"></i><i style="background:#000080"></i><i style="background:#0000ff"></i><i style="background:#800080"></i><i style="background:#ff00ff"></i><i style="background:#2b0000"></i><i style="background:#550000"></i><i style="background:#800000"></i><i style="background:#aa0000"></i><i style="background:#d40000"></i><i style="background:#ff0000"></i><i style="background:#ff2a2a"></i><i style="background:#ff5555"></i><i style="background:#ff8080"></i><i style="background:#ffaaaa"></i><i style="background:#ffd5d5"></i><i style="background:#280b0b"></i><i style="background:#501616"></i><i style="background:#782121"></i><i style="background:#a02c2c"></i><i style="background:#c83737"></i><i style="background:#d35f5f"></i><i style="background:#de8787"></i><i style="background:#e9afaf"></i><i style="background:#f4d7d7"></i><i style="background:#241c1c"></i><i style="background:#483737"></i><i style="background:#6c5353"></i><i style="background:#916f6f"></i><i style="background:#ac9393"></i><i style="background:#c8b7b7"></i><i style="background:#e3dbdb"></i><i style="background:#2b1100"></i><i style="background:#552200"></i><i style="background:#803300"></i><i style="background:#aa4400"></i><i style="background:#d45500"></i><i style="background:#ff6600"></i><i style="background:#ff7f2a"></i><i style="background:#ff9955"></i><i style="background:#ffb380"></i><i style="background:#ffccaa"></i><i style="background:#ffe6d5"></i><i style="background:#281709"></i><i style="background:#502d16"></i><i style="background:#784421"></i><i style="background:#a05a2c"></i><i style="background:#c87137"></i><i style="background:#d38d5f"></i><i style="background:#deaa87"></i><i style="background:#e9c6af"></i><i style="background:#f4e3d7"></i><i style="background:#241f1c"></i></div>
</body></html>
